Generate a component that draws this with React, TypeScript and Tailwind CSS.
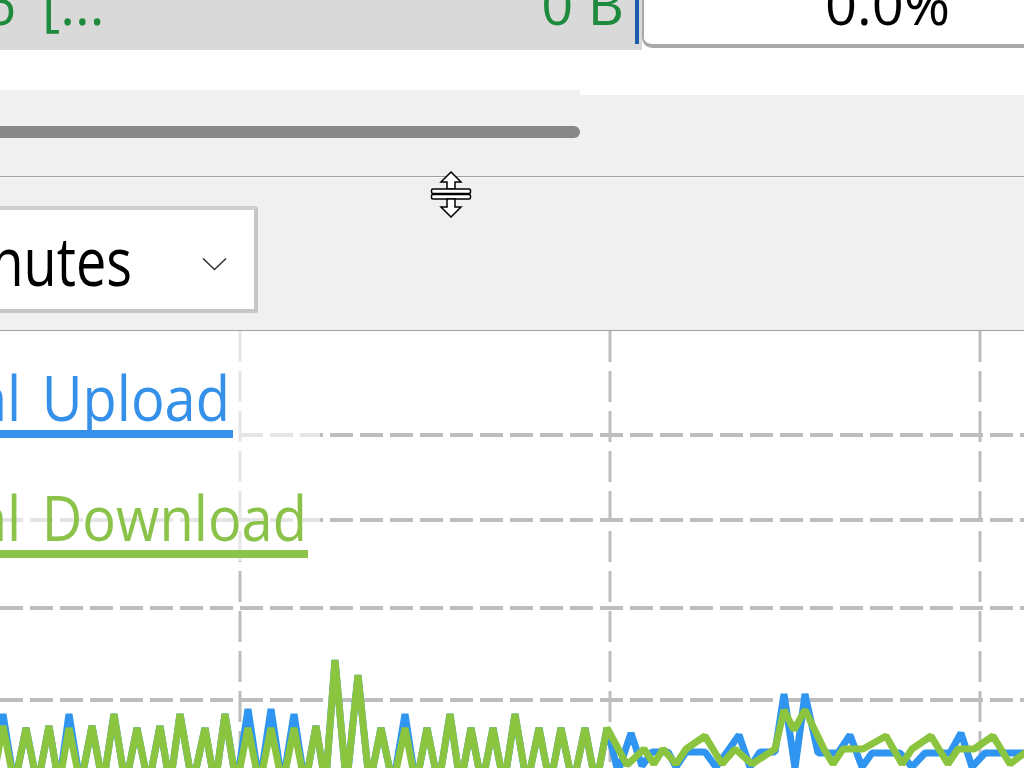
import React from 'react';

type P = [number, number];

// peaks of the left half of the graph, troughs fall below the visible area
const leftPeaks: P[] = [
  [3, 726], [26, 728], [49, 726], [69, 728], [92, 726], [114, 714], [137, 728], [160, 726],
  [180, 714], [205, 728], [225, 714], [248, 728], [271, 728], [294, 728], [316, 726], [335, 660],
  [358, 675], [381, 728], [405, 728], [427, 728], [450, 714], [471, 728], [493, 728], [515, 714],
  [539, 728], [561, 728], [585, 728], [607, 728],
];
const blueLift: Record<number, number> = { 3: 714, 69: 714, 248: 709, 271: 709, 294: 714, 405: 714 };

const greenRight: P[] = [
  [627, 765], [644, 749], [654, 764], [663, 749], [676, 764], [686, 749], [705, 736], [722, 764],
  [735, 749], [752, 764], [775, 749], [784, 710], [794, 730], [805, 710], [824, 749], [833, 764],
  [843, 749], [863, 749], [886, 736], [902, 764], [912, 749], [931, 736], [948, 764], [958, 749],
  [974, 749], [993, 736], [1010, 764], [1030, 749],
];
const blueRight: P[] = [
  [618, 772], [631, 733], [642, 766], [652, 752], [668, 752], [676, 767], [686, 752], [705, 752],
  [716, 767], [727, 752], [739, 735], [750, 767], [760, 752], [775, 752], [784, 694], [795, 768],
  [805, 694], [818, 753], [838, 753], [850, 735], [862, 767], [872, 753], [900, 753], [912, 767],
  [925, 753], [950, 753], [961, 733], [972, 767], [985, 753], [1030, 753],
];

function zig(peaks: P[], lift?: Record<number, number>): P[] {
  const out: P[] = [[-8, 785]];
  peaks.forEach((p, i) => {
    out.push([p[0], lift && lift[p[0]] ? lift[p[0]] : p[1]]);
    const n = peaks[i + 1];
    if (n) out.push([(p[0] + n[0]) / 2, 785]);
  });
  return out;
}

const pts = (list: P[]) => list.map(([x, y]) => `${x},${y - 331}`).join(' ');

const green = pts([...zig(leftPeaks), ...greenRight]);
const blue = pts([...zig(leftPeaks, blueLift), ...blueRight]);

function Chart() {
  const hLines = [435, 520, 608, 700];
  const vLines = [240, 610, 980];
  return (
    <svg className="absolute inset-0" width="1024" height="437" viewBox="0 0 1024 437">
      {hLines.map(y => (
        <line key={y} x1="0" x2="1024" y1={y - 331} y2={y - 331} stroke="#bdbdbd" strokeWidth="4" strokeDasharray="23 7" />
      ))}
      {vLines.map(x => (
        <line key={x} x1={x} x2={x} y1="0" y2="437" stroke="#bdbdbd" strokeWidth="3" strokeDasharray="31 9" />
      ))}
      <polyline points={blue} fill="none" stroke="#2f95f0" strokeWidth="7" strokeLinejoin="bevel" />
      <polyline points={green} fill="none" stroke="#8bc43f" strokeWidth="7" strokeLinejoin="bevel" />
    </svg>
  );
}

function ResizeCursor() {
  return (
    <svg width="42" height="47" viewBox="0 0 42 47" className="absolute left-[430px] -top-[7px]">
      <g fill="white" stroke="black" strokeWidth="1.5" strokeLinejoin="miter">
        <polygon points="21,1 31,11 25,11 25,18 17,18 17,11 11,11" />
        <rect x="1.5" y="18" width="39" height="4.5" rx="1.5" />
        <rect x="1.5" y="23.5" width="39" height="4.5" rx="1.5" />
        <polygon points="17,28 25,28 25,36 31,36 21,46 11,36 17,36" />
      </g>
    </svg>
  );
}

export default function App() {
  return (
    <div className="w-[1024px] h-[768px] overflow-hidden bg-white font-['Open_Sans',sans-serif] flex flex-col">
      {/* totals row */}
      <div className="flex h-[50px] shrink-0 bg-white">
        <div className="w-[642px] bg-[#d9d9d9] flex">
          <div className="flex-1 flex justify-between overflow-hidden pr-[11px] text-[56px] leading-none text-[#1e8a3d] whitespace-nowrap">
            <div className="flex -mt-[25px] -ml-[16px]">
              <span>6</span>
              <span className="ml-[26px]">[...</span>
            </div>
            <span className="-mt-[25px]">0 B</span>
          </div>
          <div className="w-[4px] h-[44px] bg-[#1b5cab]" />
          <div className="w-[3px]" />
        </div>
        <div className="flex-1 h-[48px] bg-white border-l-2 border-b-4 border-[#a9a9a9] rounded-bl-[10px] overflow-hidden pl-[181px] text-[56px] leading-none text-black whitespace-nowrap">
          <div className="-mt-[25px]">0.0%</div>
        </div>
      </div>

      <div className="h-[40px] shrink-0" />

      {/* horizontal scrollbar */}
      <div className="flex h-[5px] shrink-0">
        <div className="w-[580px] bg-[#f0f0f0]" />
        <div className="flex-1 bg-white" />
      </div>
      <div className="h-[81px] shrink-0 bg-[#f0f0f0] pt-[31px]">
        <div className="w-[580px] h-[12px] bg-[#878787] rounded-r-full" />
      </div>
      <div className="h-px shrink-0 bg-[#a0a0a0]" />
      <div className="h-px shrink-0 bg-[#fbfbfb]" />

      {/* toolbar with range picker */}
      <div className="relative h-[152px] shrink-0 bg-[#f0f0f0] pt-[28px]">
        <div className="-ml-[10px] w-[268px] h-[107px] bg-white border-4 border-[#d0d0d0] border-r-[#c6c6c6] border-b-[#c6c6c6] rounded-[3px] flex items-start pt-[29px]">
          <div className="w-[138px] flex justify-end overflow-hidden">
            <span className="inline-block whitespace-nowrap text-[54px] leading-none text-black origin-bottom scale-y-[1.25]">
              Minutes
            </span>
          </div>
          <svg width="25" height="14" viewBox="0 0 25 14" className="ml-[70px] mt-[18px]">
            <path d="M1 1.5 L12.5 12.5 L24 1.5" fill="none" stroke="#333" strokeWidth="1.6" />
          </svg>
        </div>
        <ResizeCursor />
      </div>
      <div className="h-px shrink-0 bg-[#a0a0a0]" />

      {/* chart */}
      <div className="relative flex-1">
        <Chart />
        <div className="absolute left-0 top-0 w-[320px] h-[230px] bg-white/60 pt-[39px] text-[56px] leading-none whitespace-nowrap [word-spacing:6px]">
          <div className="w-[233px] h-[68px] flex justify-end items-end pb-[2px] pr-[3px] border-b-8 border-[#3590ea] text-[#3590ea]">
            <span className="inline-block origin-bottom scale-y-[1.1]">Total Upload</span>
          </div>
          <div className="mt-[52px] w-[308px] h-[68px] flex justify-end items-end pb-[2px] pr-[1px] border-b-8 border-[#8bc34a] text-[#8bc34a]">
            <span className="inline-block origin-bottom scale-y-[1.1]">Total Download</span>
          </div>
        </div>
      </div>
    </div>
  );
}
